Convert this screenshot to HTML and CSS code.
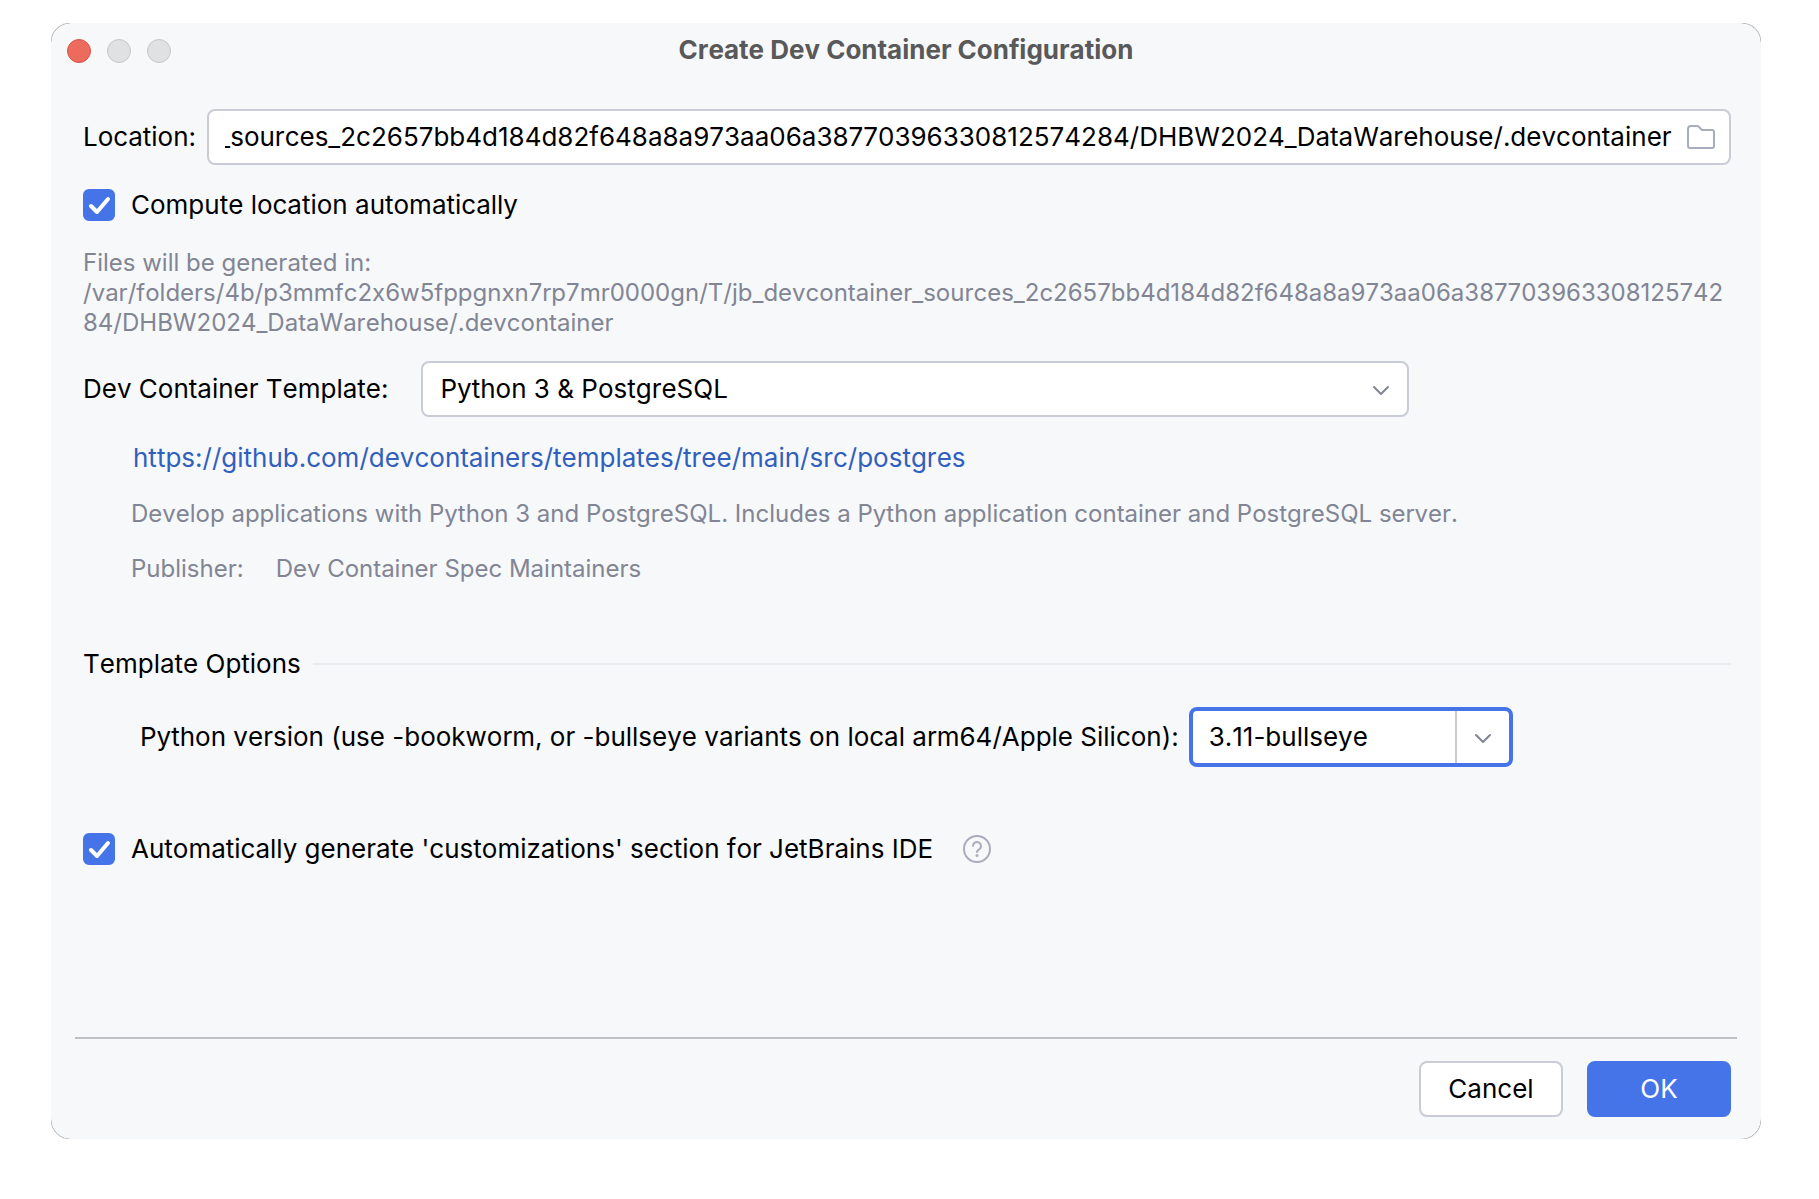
FILE: index.html
```html
<!DOCTYPE html>
<html lang="en">
<head>
<meta charset="utf-8">
<title>Create Dev Container Configuration</title>
<link rel="stylesheet" href="styles.css">
</head>
<body>
<main class="dialog" role="dialog" aria-labelledby="dialog-title">
  <header class="titlebar">
    <div class="window-controls">
      <button class="light light-close" type="button" aria-label="Close"></button>
      <button class="light" type="button" aria-label="Minimize" disabled></button>
      <button class="light" type="button" aria-label="Zoom" disabled></button>
    </div>
    <h1 class="title" id="dialog-title">Create Dev Container Configuration</h1>
  </header>

  <form class="form">
    <div class="body">
      <div class="row location-row">
        <label for="location">Location:</label>
        <div class="field location-field">
          <input class="text-input" id="location" type="text" spellcheck="false" value="/var/folders/4b/p3mmfc2x6w5fppgnxn7rp7mr0000gn/T/jb_devcontainer_sources_2c2657bb4d184d82f648a8a973aa06a38770396330812574284/DHBW2024_DataWarehouse/.devcontainer">
          <button class="icon-button" type="button" aria-label="Browse">
            <svg width="32" height="32" viewBox="0 0 32 32" fill="none" stroke="#a8adbd" stroke-width="2" stroke-linejoin="round"><path d="M3 8a3 3 0 0 1 3-3h6.200a2 2 0 0 1 1.300.5L17 9h10a2 2 0 0 1 2 2v14a2 2 0 0 1-2 2H5a2 2 0 0 1-2-2z"/></svg>
          </button>
        </div>
      </div>

      <div class="row check-row">
        <span class="check">
          <input class="checkbox" id="compute" type="checkbox" checked>
          <svg class="tick" width="32" height="32" viewBox="0 0 32 32" fill="none" stroke="#fff" stroke-width="4" stroke-linecap="round" stroke-linejoin="round"><path d="M8 17l6 6L25 10"/></svg>
        </span>
        <label for="compute">Compute location automatically</label>
      </div>

      <p class="hint path-hint">Files will be generated in:<br>/var/folders/4b/p3mmfc2x6w5fppgnxn7rp7mr0000gn/T/jb_devcontainer_sources_2c2657bb4d184d82f648a8a973aa06a38770396330812574284/DHBW2024_DataWarehouse/.devcontainer</p>

      <div class="row template-row">
        <label for="template">Dev Container Template:</label>
        <div class="select-wrap">
          <select class="select" id="template">
            <option>Python 3 &amp; PostgreSQL</option>
          </select>
          <svg class="chevron" width="32" height="32" viewBox="0 0 32 32" fill="none" stroke="#818594" stroke-width="2" stroke-linecap="round" stroke-linejoin="round"><path d="M9 14l7 7 7-7"/></svg>
        </div>
      </div>

      <div class="details">
        <a class="link" href="https://github.com/devcontainers/templates/tree/main/src/postgres">https://github.com/devcontainers/templates/tree/main/src/postgres</a>
        <p class="hint">Develop applications with Python 3 and PostgreSQL. Includes a Python application container and PostgreSQL server.</p>
        <p class="hint publisher"><span>Publisher:</span><span>Dev Container Spec Maintainers</span></p>
      </div>

      <h2 class="section-title">Template Options</h2>

      <div class="row version-row">
        <label for="version">Python version (use -bookworm, or -bullseye variants on local arm64/Apple Silicon):</label>
        <div class="combo">
          <input class="combo-input" id="version" type="text" value="3.11-bullseye" spellcheck="false">
          <button class="combo-button" type="button" aria-label="Show versions">
            <svg width="32" height="32" viewBox="0 0 32 32" fill="none" stroke="#818594" stroke-width="2" stroke-linecap="round" stroke-linejoin="round"><path d="M9 14l7 7 7-7"/></svg>
          </button>
        </div>
      </div>

      <div class="row check-row customizations-row">
        <span class="check">
          <input class="checkbox" id="customizations" type="checkbox" checked>
          <svg class="tick" width="32" height="32" viewBox="0 0 32 32" fill="none" stroke="#fff" stroke-width="4" stroke-linecap="round" stroke-linejoin="round"><path d="M8 17l6 6L25 10"/></svg>
        </span>
        <label for="customizations">Automatically generate 'customizations' section for JetBrains IDE</label>
        <button class="icon-button help" type="button" aria-label="Help">
          <svg width="32" height="32" viewBox="0 0 32 32" fill="none" stroke="#a8adbd" stroke-width="2" stroke-linecap="round"><circle cx="16" cy="16" r="13"/><path d="M12 13a4 4 0 1 1 6.600 3C17 17.200 16 17.600 16 19"/><circle cx="16" cy="22.500" r="1.500" fill="#a8adbd" stroke="none"/></svg>
        </button>
      </div>
    </div>

    <footer class="footer">
      <button class="button" type="button">Cancel</button>
      <button class="button button-primary" type="submit">OK</button>
    </footer>
  </form>
</main>
<script src="main.js"></script>
</body>
</html>
```

FILE: main.js
```js
// Keep the end of the path in view, where the folder name is.
const locationInput = document.getElementById('location');
locationInput.scrollLeft = locationInput.scrollWidth;
```

FILE: styles.css
```css
* {
  box-sizing: border-box;
}

body {
  margin: 0;
  padding: 23px 58px 60px 51px;
  min-height: 100vh;
  display: flex;
  background: #fff;
  color: #000;
  font: 26px/32px Inter, "Liberation Sans", sans-serif;
  font-kerning: none;
  font-feature-settings: "calt" 0;
}

input,
select,
button {
  font: inherit;
  font-kerning: inherit;
  font-feature-settings: inherit;
  color: inherit;
  margin: 0;
}

h1,
h2,
p {
  margin: 0;
}

/* The clip keeps the shadow inside the box, so only the corners are edged. */
.dialog {
  flex: 1;
  min-width: 0;
  display: flex;
  flex-direction: column;
  background: #f7f8fa;
  border-radius: 20px;
  box-shadow: 0 0 1px #000;
  clip-path: inset(0);
}

.titlebar {
  display: grid;
  grid-template-columns: 1fr auto 1fr;
  align-items: center;
  height: 56px;
  padding: 0 16px;
}

.window-controls {
  display: flex;
  gap: 16px;
}

.light {
  width: 24px;
  height: 24px;
  padding: 0;
  border: 1px solid #c6c7c8;
  border-radius: 50%;
  background: #e0e1e2;
}

.light-close {
  border-color: #d9544a;
  background: #ed6a5e;
}

.title {
  padding-bottom: 2px;
  color: #59595a;
  font-size: 26px;
  font-weight: 700;
}

.form {
  flex: 1;
  display: flex;
  flex-direction: column;
}

.body {
  flex: 1;
  padding: 30px 30px 24px 32px;
}

.row {
  display: flex;
  align-items: center;
}

.location-row {
  gap: 11px;
}

.field {
  flex: 1;
  min-width: 0;
  display: flex;
  align-items: center;
  height: 56px;
  padding: 0 12px 0 16px;
  border: 2px solid #c9ccd6;
  border-radius: 8px;
  background: #fff;
}

.text-input {
  flex: 1;
  min-width: 0;
  height: 32px;
  padding: 0;
  border: 0;
  outline: 0;
  background: none;
}

.icon-button {
  display: flex;
  padding: 0;
  border: 0;
  background: none;
}

.location-field .icon-button {
  margin-left: 13px;
}

.check-row {
  gap: 16px;
  margin-top: 24px;
}

.check {
  display: grid;
}

.checkbox,
.tick {
  grid-area: 1 / 1;
}

.checkbox {
  appearance: none;
  width: 32px;
  height: 32px;
  border: 2px solid #c9ccd6;
  border-radius: 6px;
  background: #fff;
}

.checkbox:checked {
  border-color: #4574e8;
  background: #4574e8;
}

.tick {
  pointer-events: none;
}

.checkbox:not(:checked) + .tick {
  visibility: hidden;
}

.hint {
  color: #818594;
  font-size: 24px;
  line-height: 30px;
}

.path-hint {
  margin-top: 27px;
  word-break: break-all;
}

.template-row {
  gap: 32px;
  margin-top: 23px;
}

.select-wrap {
  display: grid;
  align-items: center;
  width: 60%;
}

.select,
.chevron {
  grid-area: 1 / 1;
}

.select {
  appearance: none;
  height: 56px;
  padding: 0 48px 0 18px;
  border: 2px solid #c9ccd6;
  border-radius: 8px;
  background: #fff;
}

.chevron {
  justify-self: end;
  margin-right: 12px;
  pointer-events: none;
}

.details {
  display: flex;
  flex-direction: column;
  align-items: flex-start;
  gap: 25px;
  margin-top: 25px;
  padding-left: 48px;
}

.link {
  padding: 0 2px;
  color: #315fbd;
  text-decoration: none;
}

.publisher {
  display: flex;
  gap: 32px;
}

.section-title {
  display: flex;
  align-items: center;
  gap: 12px;
  margin-top: 64px;
  font-size: 26px;
  font-weight: 400;
}

.section-title::after {
  content: "";
  flex: 1;
  height: 2px;
  background: #ebecf0;
}

.version-row {
  gap: 10px;
  margin-top: 27px;
  padding-left: 57px;
}

.combo {
  display: flex;
  width: 324px;
  height: 60px;
  border: 4px solid #4574e8;
  border-radius: 8px;
  background: #fff;
}

.combo-input {
  flex: 1;
  min-width: 0;
  padding: 0 16px;
  border: 0;
  outline: 0;
  background: none;
}

.combo-button {
  display: flex;
  align-items: center;
  justify-content: center;
  width: 54px;
  padding: 0;
  border: 0;
  border-left: 2px solid #c9ccd6;
  background: none;
}

.customizations-row {
  margin-top: 66px;
}

.help {
  margin-left: 12px;
}

.footer {
  display: flex;
  justify-content: flex-end;
  gap: 24px;
  margin: 0 24px;
  padding: 22px 6px;
  border-top: 2px solid #bfc0c3;
}

.button {
  width: 144px;
  height: 56px;
  padding: 0;
  border: 2px solid #c9ccd6;
  border-radius: 8px;
  background: #fff;
}

.button-primary {
  border-color: #4574e8;
  background: #4574e8;
  color: #fff;
}
```
